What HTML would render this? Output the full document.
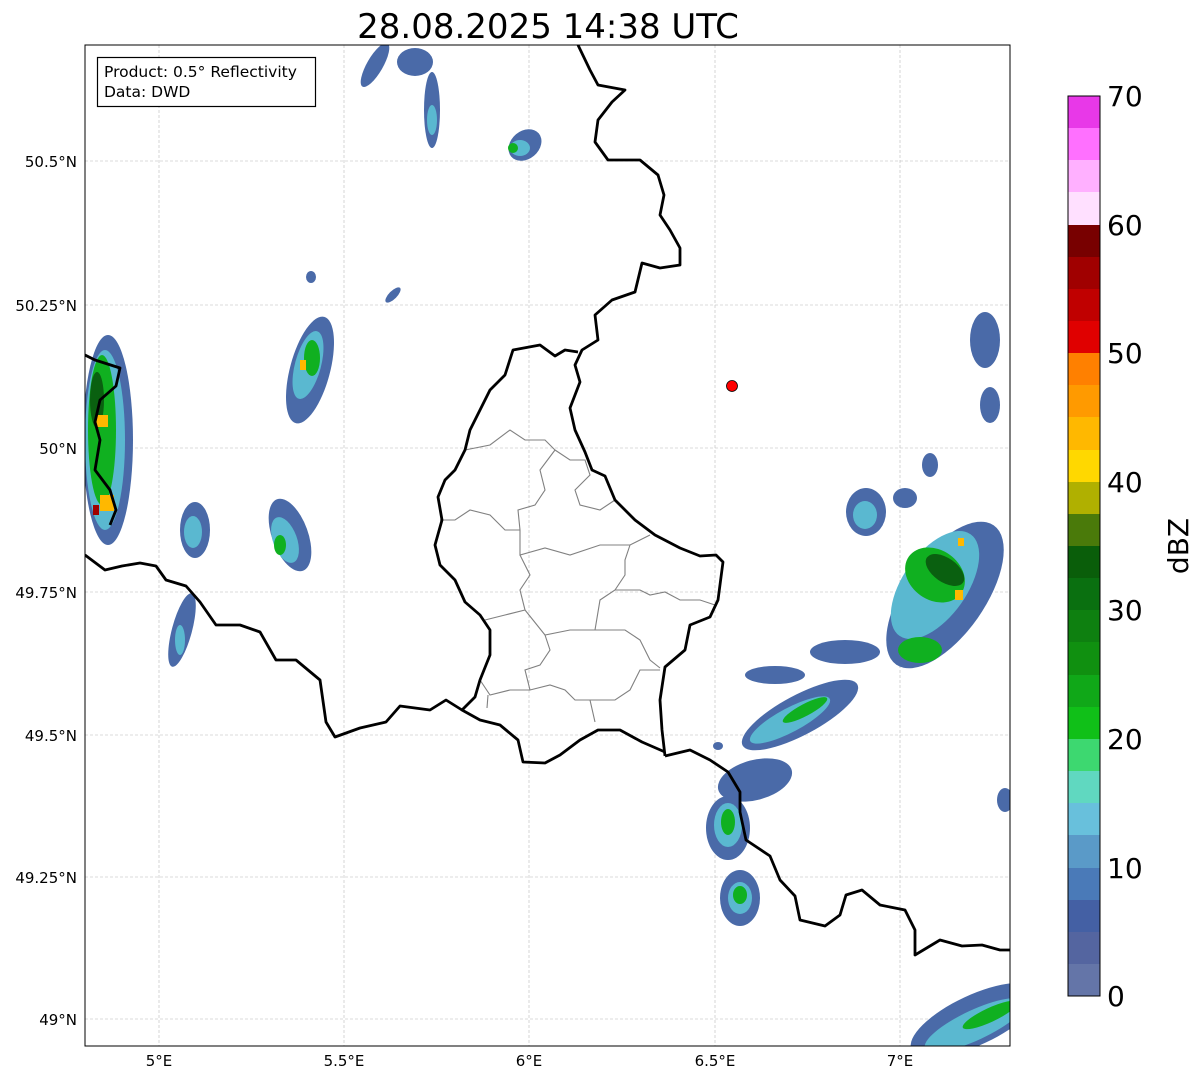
<!DOCTYPE html>
<html><head><meta charset="utf-8"><style>
body{margin:0;background:#fff;width:1202px;height:1081px;overflow:hidden;font-family:"Liberation Sans","DejaVu Sans",sans-serif}
</style></head><body>
<svg width="1202" height="1081" xmlns="http://www.w3.org/2000/svg" font-family="'DejaVu Sans','Liberation Sans',sans-serif">
<rect width="1202" height="1081" fill="#fff"/>
<text x="548" y="38" font-size="34" text-anchor="middle" fill="#000">28.08.2025 14:38 UTC</text>
<defs><clipPath id="c"><rect x="85" y="45" width="925" height="1001"/></clipPath></defs>
<g clip-path="url(#c)">
<g stroke="#b8b8b8" stroke-width="0.6" stroke-dasharray="3,2">
<line x1="159" y1="45" x2="159" y2="1046"/><line x1="344" y1="45" x2="344" y2="1046"/><line x1="529" y1="45" x2="529" y2="1046"/><line x1="715" y1="45" x2="715" y2="1046"/><line x1="900" y1="45" x2="900" y2="1046"/>
<line x1="85" y1="161" x2="1010" y2="161"/><line x1="85" y1="305" x2="1010" y2="305"/><line x1="85" y1="448" x2="1010" y2="448"/><line x1="85" y1="592" x2="1010" y2="592"/><line x1="85" y1="735" x2="1010" y2="735"/><line x1="85" y1="877" x2="1010" y2="877"/><line x1="85" y1="1019" x2="1010" y2="1019"/>
</g>
<g>
<g fill="#4a6aa8">
<ellipse cx="375" cy="65" rx="8" ry="25" transform="rotate(30 375 65)"/><ellipse cx="415" cy="62" rx="18" ry="14"/><ellipse cx="432" cy="110" rx="8" ry="38"/><ellipse cx="525" cy="145" rx="18" ry="14" transform="rotate(-40 525 145)"/>
<ellipse cx="310" cy="370" rx="20" ry="55" transform="rotate(15 310 370)"/>
<ellipse cx="393" cy="295" rx="10" ry="4" transform="rotate(-45 393 295)"/><ellipse cx="311" cy="277" rx="5" ry="6"/>
<ellipse cx="108" cy="440" rx="25" ry="105"/>
<ellipse cx="195" cy="530" rx="15" ry="28"/><ellipse cx="290" cy="535" rx="18" ry="38" transform="rotate(-20 290 535)"/><ellipse cx="182" cy="630" rx="10" ry="38" transform="rotate(15 182 630)"/>
<ellipse cx="985" cy="340" rx="15" ry="28"/><ellipse cx="990" cy="405" rx="10" ry="18"/><ellipse cx="930" cy="465" rx="8" ry="12"/>
<ellipse cx="866" cy="512" rx="20" ry="24"/><ellipse cx="905" cy="498" rx="12" ry="10"/>
<ellipse cx="945" cy="595" rx="40" ry="85" transform="rotate(35 945 595)"/>
<ellipse cx="845" cy="652" rx="35" ry="12"/>
<ellipse cx="800" cy="715" rx="65" ry="20" transform="rotate(-28 800 715)"/>
<ellipse cx="755" cy="780" rx="38" ry="20" transform="rotate(-15 755 780)"/>
<ellipse cx="728" cy="828" rx="22" ry="32"/>
<ellipse cx="740" cy="898" rx="20" ry="28"/>
<ellipse cx="975" cy="1020" rx="70" ry="25" transform="rotate(-25 975 1020)"/>
<ellipse cx="1005" cy="800" rx="8" ry="12"/><ellipse cx="775" cy="675" rx="30" ry="9"/><ellipse cx="718" cy="746" rx="5" ry="4"/>
</g>
<g fill="#5ab8d0">
<ellipse cx="432" cy="120" rx="5" ry="15"/><ellipse cx="520" cy="148" rx="10" ry="8"/>
<ellipse cx="308" cy="365" rx="13" ry="35" transform="rotate(15 308 365)"/>
<ellipse cx="105" cy="440" rx="20" ry="90"/>
<ellipse cx="285" cy="540" rx="12" ry="24" transform="rotate(-20 285 540)"/><ellipse cx="193" cy="532" rx="9" ry="16"/><ellipse cx="180" cy="640" rx="5" ry="15"/>
<ellipse cx="935" cy="585" rx="32" ry="62" transform="rotate(35 935 585)"/>
<ellipse cx="790" cy="720" rx="45" ry="12" transform="rotate(-28 790 720)"/>
<ellipse cx="728" cy="825" rx="14" ry="22"/><ellipse cx="740" cy="898" rx="12" ry="16"/>
<ellipse cx="975" cy="1025" rx="55" ry="15" transform="rotate(-25 975 1025)"/>
<ellipse cx="865" cy="515" rx="12" ry="14"/>
</g>
<g fill="#10b020">
<ellipse cx="312" cy="358" rx="8" ry="18"/>
<ellipse cx="102" cy="430" rx="14" ry="75"/>
<ellipse cx="280" cy="545" rx="6" ry="10"/>
<ellipse cx="935" cy="575" rx="32" ry="25" transform="rotate(35 935 575)"/>
<ellipse cx="920" cy="650" rx="22" ry="13"/>
<ellipse cx="805" cy="710" rx="25" ry="6" transform="rotate(-28 805 710)"/>
<ellipse cx="728" cy="822" rx="7" ry="13"/><ellipse cx="740" cy="895" rx="7" ry="9"/>
<ellipse cx="990" cy="1015" rx="30" ry="7" transform="rotate(-25 990 1015)"/>
<ellipse cx="513" cy="148" rx="5" ry="5"/>
</g>
<g fill="#0a6010"><ellipse cx="945" cy="570" rx="22" ry="12" transform="rotate(35 945 570)"/><ellipse cx="97" cy="400" rx="7" ry="28"/></g>
<g fill="#ffb800"><rect x="955" y="590" width="8" height="10"/><rect x="100" y="495" width="14" height="16"/><rect x="96" y="415" width="12" height="12"/><rect x="300" y="360" width="6" height="10"/><rect x="958" y="538" width="6" height="8"/></g>
<rect x="93" y="505" width="6" height="10" fill="#a00000"/>
</g>
<g fill="none" stroke="#808080" stroke-width="1.1">
<path d="M465,450 L490,445 L510,430 L525,440 L545,440 L555,450 L540,470 L545,490 L535,505 L518,510 L520,530 L520,555 L545,548 L570,555 L600,545 L630,545 L650,535"/>
<path d="M555,450 L570,460 L585,460 L590,475 L575,490 L580,505 L600,510 L615,500"/>
<path d="M440,520 L455,520 L470,510 L490,515 L505,530 L520,530"/>
<path d="M520,555 L530,575 L520,590 L525,610 L505,615 L485,620"/>
<path d="M630,545 L625,560 L625,575 L615,590 L600,600 L595,630 L570,630 L545,635 L525,610"/>
<path d="M615,590 L640,590 L650,595 L665,592 L680,600 L700,600 L715,605"/>
<path d="M595,630 L625,630 L640,640 L650,660 L660,668"/>
<path d="M545,635 L550,650 L540,665 L525,670 L530,690 L550,685 L565,690 L575,700 L590,700 L595,722"/>
<path d="M480,680 L490,695 L510,690 L530,690"/>
<path d="M590,700 L615,700 L630,690 L640,670 L660,670"/>
<path d="M488,695 L487,708"/>
</g>
<g fill="none" stroke="#000" stroke-width="2.8" stroke-linejoin="round">
<path d="M578,45 L590,70 L598,85 L625,90 L612,102 L598,120 L595,142 L608,160 L640,160 L658,175 L664,195 L660,215 L670,230 L680,248 L680,265 L660,268 L642,263 L635,292 L612,300 L595,315 L598,340 L582,350 L575,365 L580,382 L570,408 L575,430 L585,452 L592,470 L605,476 L615,500 L635,520 L655,535 L680,548 L700,556 L716,555 L723,562 L718,600 L710,617 L690,625 L685,650 L665,667 L660,700 L662,730 L665,756"/>
<path d="M578,352 L565,350 L555,356 L540,345 L513,350 L505,375 L490,390 L480,410 L470,430 L465,450 L455,470 L445,480 L438,497 L442,520 L435,545 L440,565 L455,580 L465,602 L480,615 L490,630 L490,655 L480,680 L475,697 L462,710 L480,720 L500,725 L518,740 L523,762 L545,763 L560,755 L580,740 L598,730 L620,730 L642,742 L665,752"/>
<path d="M85,555 L105,570 L122,566 L140,563 L156,566 L166,580 L186,586 L200,602 L216,625 L240,625 L260,632 L276,660 L296,660 L320,680 L326,722 L335,737 L360,728 L386,722 L400,706 L430,710 L446,700 L462,710"/>
<path d="M85,355 L95,360 L120,368 L116,386 L100,400 L95,422 L100,440 L95,470 L110,490 L116,510 L110,525"/>
<path d="M665,756 L690,750 L710,760 L728,772 L740,792 L740,812 L746,840 L770,856 L780,880 L795,896 L800,920 L825,926 L840,915 L846,895 L862,890 L880,905 L905,910 L915,930 L915,955 L940,940 L962,946 L982,945 L1000,950 L1010,950"/>
</g>
<circle cx="732" cy="386" r="5.5" fill="#ff0000" stroke="#000" stroke-width="0.8"/>
</g>
<rect x="85" y="45" width="925" height="1001" fill="none" stroke="#000" stroke-width="1"/>
<rect x="97.5" y="57.5" width="218" height="49" fill="#fff" stroke="#000" stroke-width="1.2"/>
<text x="104" y="77" font-size="15.5">Product: 0.5° Reflectivity</text>
<text x="104" y="97" font-size="15.5">Data: DWD</text>
<g font-size="15" text-anchor="end" fill="#000">
<text x="77" y="167">50.5°N</text><text x="77" y="311">50.25°N</text><text x="77" y="454">50°N</text><text x="77" y="598">49.75°N</text><text x="77" y="741">49.5°N</text><text x="77" y="883">49.25°N</text><text x="77" y="1025">49°N</text>
</g>
<g font-size="15" text-anchor="middle" fill="#000">
<text x="159" y="1066">5°E</text><text x="344" y="1066">5.5°E</text><text x="529" y="1066">6°E</text><text x="715" y="1066">6.5°E</text><text x="900" y="1066">7°E</text>
</g>
<g>
<rect x="1068" y="96" width="32" height="33" fill="#e838e8"/>
<rect x="1068" y="128" width="32" height="33" fill="#ff70ff"/>
<rect x="1068" y="160" width="32" height="33" fill="#ffb0ff"/>
<rect x="1068" y="192" width="32" height="33" fill="#ffe0ff"/>
<rect x="1068" y="225" width="32" height="33" fill="#780000"/>
<rect x="1068" y="257" width="32" height="33" fill="#a00000"/>
<rect x="1068" y="289" width="32" height="33" fill="#c00000"/>
<rect x="1068" y="321" width="32" height="33" fill="#e00000"/>
<rect x="1068" y="353" width="32" height="33" fill="#ff8000"/>
<rect x="1068" y="385" width="32" height="33" fill="#ff9a00"/>
<rect x="1068" y="417" width="32" height="33" fill="#ffb800"/>
<rect x="1068" y="450" width="32" height="33" fill="#ffd800"/>
<rect x="1068" y="482" width="32" height="33" fill="#b0b000"/>
<rect x="1068" y="514" width="32" height="33" fill="#4a7a0a"/>
<rect x="1068" y="546" width="32" height="33" fill="#0a5e0a"/>
<rect x="1068" y="578" width="32" height="33" fill="#0a7010"/>
<rect x="1068" y="610" width="32" height="33" fill="#0e8010"/>
<rect x="1068" y="642" width="32" height="33" fill="#109010"/>
<rect x="1068" y="675" width="32" height="33" fill="#10a818"/>
<rect x="1068" y="707" width="32" height="33" fill="#10c018"/>
<rect x="1068" y="739" width="32" height="33" fill="#3dd870"/>
<rect x="1068" y="771" width="32" height="33" fill="#60d8c0"/>
<rect x="1068" y="803" width="32" height="33" fill="#68c0dc"/>
<rect x="1068" y="835" width="32" height="33" fill="#5a9ac8"/>
<rect x="1068" y="868" width="32" height="33" fill="#4a7ab8"/>
<rect x="1068" y="900" width="32" height="33" fill="#4460a4"/>
<rect x="1068" y="932" width="32" height="33" fill="#5465a0"/>
<rect x="1068" y="964" width="32" height="32" fill="#6475a8"/>
<rect x="1068" y="96" width="32" height="900" fill="none" stroke="#000" stroke-width="1"/>
</g>
<g font-size="28" fill="#000">
<text x="1107" y="106">70</text><text x="1107" y="235">60</text><text x="1107" y="363">50</text><text x="1107" y="492">40</text><text x="1107" y="620">30</text><text x="1107" y="749">20</text><text x="1107" y="878">10</text><text x="1107" y="1006">0</text>
</g>
<text transform="translate(1188 546) rotate(-90)" font-size="28" text-anchor="middle">dBZ</text>
</svg>
</body></html>
